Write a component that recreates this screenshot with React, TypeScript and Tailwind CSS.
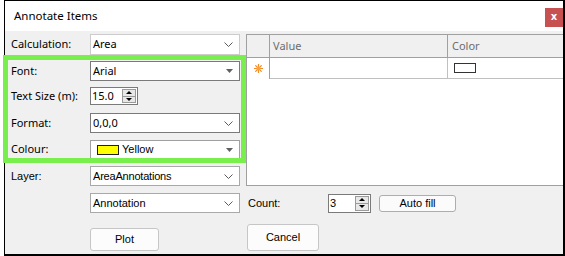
import React from "react";

const SEG = "font-['Segoe_UI','Noto_Sans',sans-serif] text-[11px] text-black";
const MS = "font-['Liberation_Sans',Arial,sans-serif] text-[11px] text-black";

function Chevron() {
  return (
    <svg width="9" height="5" viewBox="0 0 9 5" className="mr-[6px] shrink-0">
      <path d="M0.5 0.5 L4.5 4.5 L8.5 0.5" fill="none" stroke="#5a5a5a" strokeWidth="1" />
    </svg>
  );
}

function Triangle() {
  return (
    <svg width="7" height="4" viewBox="0 0 7 4" className="mr-[6px] shrink-0">
      <path d="M0 0 L7 0 L3.5 4 Z" fill="#606060" />
    </svg>
  );
}

function Combo({
  children,
  h,
  border,
  tri,
}: {
  children: React.ReactNode;
  h: string;
  border: string;
  tri?: boolean;
}) {
  return (
    <div className={`w-[150px] ${h} bg-white border ${border} flex items-center justify-between`}>
      <div className="flex items-center pl-[2px] min-w-0">{children}</div>
      {tri ? <Triangle /> : <Chevron />}
    </div>
  );
}

function SpinArrows() {
  return (
    <div className="w-[14px] ml-auto mr-[1px] my-[1px] border border-[#9a9a9a] bg-[#e8e8e8] flex flex-col">
      <div className="flex-1 flex items-center justify-center border-b border-[#9a9a9a]">
        <svg width="6" height="3" viewBox="0 0 6 3">
          <path d="M0 3 L6 3 L3 0 Z" fill="#000" />
        </svg>
      </div>
      <div className="flex-1 flex items-center justify-center">
        <svg width="6" height="3" viewBox="0 0 6 3">
          <path d="M0 0 L6 0 L3 3 Z" fill="#000" />
        </svg>
      </div>
    </div>
  );
}

function Row({ label, children, cls }: { label: string; children: React.ReactNode; cls: string }) {
  return (
    <div className={`flex items-center ${cls}`}>
      <div className={`w-[85px] pl-[6px] ${SEG}`}>{label}</div>
      {children}
    </div>
  );
}

export default function App() {
  return (
    <div className="w-[565px] h-[256px] bg-white relative overflow-hidden">
      <div className="ml-[4px] w-[561px] h-[256px] border-l border-t border-r-2 border-b-2 border-black flex flex-col">
        {/* Title bar */}
        <div className="h-[30px] bg-white flex items-start justify-between">
          <div className="pl-[9px] pt-[6px] font-['Segoe_UI','Noto_Sans',sans-serif] text-[11.5px] leading-[18px] text-black">
            Annotate Items
          </div>
          <div className="mt-[7px] w-[18px] h-[19px] bg-[#c75050] flex items-center justify-center text-white font-['DejaVu_Sans',sans-serif] font-bold text-[10px] leading-none pb-[1px]">
            x
          </div>
        </div>

        {/* Body */}
        <div className="flex-1 bg-[#f0f0f0] flex flex-col">
          <div className="flex pt-[3px]">
            <div className="w-[235px] flex flex-col">
              <Row label="Calculation:" cls="h-[21px]">
                <Combo h="h-[21px]" border="border-[#cccccc]">
                  <span className={SEG}>Area</span>
                </Combo>
              </Row>
              <Row label="Font:" cls="h-[20px] mt-[6px]">
                <Combo h="h-[20px]" border="border-[#7a7a7a]" tri>
                  <span className={SEG}>Arial</span>
                </Combo>
              </Row>
              <Row label="Text Size (m):" cls="h-[18px] mt-[6px]">
                <div className="w-[48px] h-[18px] bg-white border border-[#7a7a7a] flex items-stretch">
                  <span className={`${SEG} pl-[1px] leading-[16px]`}>15.0</span>
                  <SpinArrows />
                </div>
              </Row>
              <Row label="Format:" cls="h-[20px] mt-[8px]">
                <Combo h="h-[20px]" border="border-[#7a7a7a]">
                  <span className={SEG}>0,0,0</span>
                </Combo>
              </Row>
              <Row label="Colour:" cls="h-[19px] mt-[7px]">
                <Combo h="h-[19px]" border="border-[#a0a0a0]" tri>
                  <span className="ml-[4px] w-[22px] h-[10px] bg-[#ffff00] border border-[#222]" />
                  <span className={`${MS} ml-[3px]`}>Yellow</span>
                </Combo>
              </Row>
              <div className="flex items-center h-[20px] mt-[7px]">
                <div className={`w-[85px] pl-[6px] ${MS}`}>Layer:</div>
                <Combo h="h-[20px]" border="border-[#a9a9a9]">
                  <span className={`${MS} tracking-[-0.2px]`}>AreaAnnotations</span>
                </Combo>
              </div>
            </div>

            {/* Grid */}
            <div className="ml-[6px] flex-1 h-[152px] bg-white border-l border-t border-b border-[#a0a0a0] flex flex-col">
              <div className="h-[23px] bg-[#f0f0f0] border-b border-[#a0a0a0] flex">
                <div className="w-[23px] border-r border-[#a0a0a0]" />
                <div className="w-[178px] border-r border-[#a0a0a0] flex items-center pl-[3px] font-['Segoe_UI','Noto_Sans',sans-serif] text-[11px] text-[#6d6d6d]">
                  Value
                </div>
                <div className="flex-1 flex items-center pl-[4px] font-['Segoe_UI','Noto_Sans',sans-serif] text-[11px] text-[#6d6d6d]">
                  Color
                </div>
              </div>
              <div className="h-[21px] flex">
                <div className="w-[23px] border-r border-[#a0a0a0] flex items-center justify-center">
                  <svg width="9" height="9" viewBox="0 0 9 9" className="ml-[1px]">
                    <g stroke="#f08a24" strokeWidth="1.2" strokeLinecap="round">
                      <line x1="4.5" y1="0.5" x2="4.5" y2="8.5" />
                      <line x1="0.5" y1="4.5" x2="8.5" y2="4.5" />
                      <line x1="1.7" y1="1.7" x2="7.3" y2="7.3" />
                      <line x1="7.3" y1="1.7" x2="1.7" y2="7.3" />
                    </g>
                    <circle cx="4.5" cy="4.5" r="2" fill="#f5a04a" />
                  </svg>
                </div>
                <div className="w-[178px] border-r border-b border-[#c0c0c0]" />
                <div className="flex-1 border-b border-[#c0c0c0]">
                  <div className="ml-[6px] mt-[5px] w-[22px] h-[10px] border border-[#333] bg-white" />
                </div>
              </div>
            </div>
          </div>

          {/* Annotation / Count row */}
          <div className="flex items-center h-[20px] mt-[7px]">
            <div className="w-[85px]" />
            <Combo h="h-[20px]" border="border-[#a9a9a9]">
              <span className={MS}>Annotation</span>
            </Combo>
            <div className={`ml-[8px] w-[80px] ${MS}`}>Count:</div>
            <div className="w-[43px] h-[19px] bg-white border border-[#7a7a7a] flex items-stretch">
              <span className={`${MS} pl-[1px] leading-[16px]`}>3</span>
              <SpinArrows />
            </div>
            <div className={`ml-[8px] w-[77px] h-[17px] bg-[#fbfbfb] border border-[#adadad] rounded-[3px] flex items-center justify-center ${MS}`}>
              Auto fill
            </div>
          </div>

          {/* Buttons row */}
          <div className="flex items-end mt-[11px]">
            <div className="w-[85px]" />
            <div className={`w-[69px] h-[23px] bg-[#fcfcfc] border border-[#c6c6c6] rounded-[3px] flex items-center justify-center ${MS}`}>
              Plot
            </div>
            <div className={`ml-[88px] w-[72px] h-[27px] bg-[#fcfcfc] border border-[#c6c6c6] rounded-[3px] flex items-center justify-center ${MS}`}>
              Cancel
            </div>
          </div>
        </div>
      </div>

      {/* Green highlight overlay */}
      <div className="absolute left-[3px] top-[55px] w-[243px] h-[108px] border-[5px] border-[#78ef4c] pointer-events-none" />
    </div>
  );
}
